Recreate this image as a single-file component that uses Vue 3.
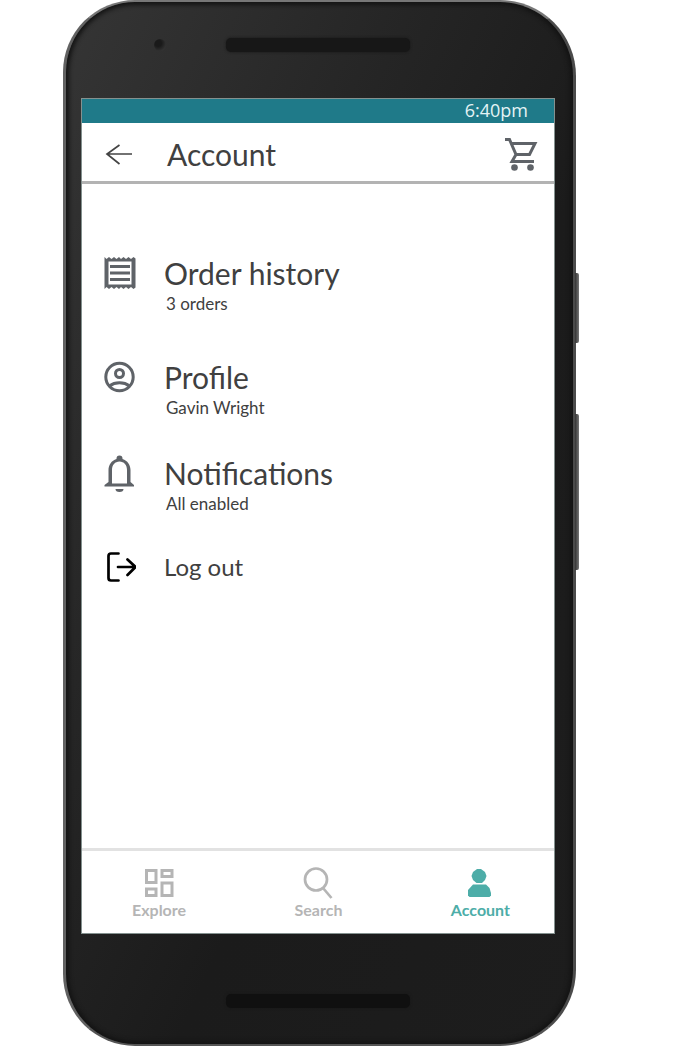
<script setup>
const entries = [
  { id: 'orders', title: 'Order history', detail: '3 orders' },
  { id: 'profile', title: 'Profile', detail: 'Gavin Wright' },
  { id: 'notifications', title: 'Notifications', detail: 'All enabled' },
]
</script>

<template>
  <div class="page">
    <div class="phone">
      <div class="side-keys" aria-hidden="true">
        <span class="key power"></span>
        <span class="key volume"></span>
      </div>
      <div class="bezel top" aria-hidden="true">
        <span class="camera"></span>
        <span class="speaker"></span>
      </div>

      <div class="screen">
        <div class="status"><time>6:40pm</time></div>

        <header class="appbar">
          <button class="icon-button" type="button" aria-label="Back">
            <svg width="28" height="24" viewBox="0 0 28 24" fill="none" stroke="#444" stroke-width="1.7">
              <path d="M27 12H2M14.500 3L2 12l12.500 10" />
            </svg>
          </button>
          <h1>Account</h1>
          <button class="icon-button cart" type="button" aria-label="Cart">
            <svg width="34" height="34" viewBox="0 0 34 34" fill="none" stroke="#5f6368" stroke-width="3">
              <path d="M1 2.500H5.500L12 17.500H25.500L31 6.500H7.500M12 17.500L8 24.500H30" />
              <circle cx="10.500" cy="30.500" r="3.300" fill="#5f6368" stroke="none" />
              <circle cx="26.500" cy="30.500" r="3.300" fill="#5f6368" stroke="none" />
            </svg>
          </button>
        </header>

        <main>
          <ul class="menu">
            <li v-for="entry in entries" :key="entry.id" :class="entry.id">
              <a href="#" class="entry">
                <span class="entry-icon">
                  <svg v-if="entry.id === 'orders'" width="32" height="34" viewBox="0 0 32 34">
                    <path fill="#5f6368" fill-rule="evenodd" d="M0.500 1l2 2 2.500-2 2.500 2L10 1l2.500 2L15 1l2 2 2.500-2L22 3l2.500-2L27 3l2.500-2 2 1.500v29L29.500 33 27 31l-2.500 2-2.500-2-2.500 2-2.500-2-2 2-2.500-2-2.500 2-2.500-2L5 33l-2.500-2-2 2zM4.500 5.500v23h23v-23z" />
                    <path stroke="#5f6368" stroke-width="3" d="M6 10.500h20M6 17h20M6 23.500h20" />
                  </svg>
                  <svg v-else-if="entry.id === 'profile'" width="32" height="32" viewBox="0 0 32 32" fill="none" stroke="#5f6368" stroke-width="3">
                    <circle cx="15.500" cy="16" r="13.700" />
                    <circle cx="15.500" cy="12.500" r="4" />
                    <path d="M5.500 25C11 20.800 20 20.800 25.500 25" />
                  </svg>
                  <svg v-else width="32" height="38" viewBox="0 0 32 38">
                    <path fill="#5f6368" fill-rule="evenodd" d="M12.500 5V4.500a3 3 0 0 1 6 0V5c5 1.500 8 6 8 11v12l3.500 3v1.500H0.500V31l4-3V16c0-5 3-9.500 8-11zM8 29.500h15V16c0-5-3-8.500-7.500-8.500S8 11 8 16z" />
                    <path fill="#5f6368" d="M11.500 35h8a4 3 0 0 1-8 0z" />
                  </svg>
                </span>
                <span class="title">{{ entry.title }}</span>
                <span class="detail">{{ entry.detail }}</span>
              </a>
            </li>
            <li>
              <button type="button" class="entry logout">
                <span class="entry-icon">
                  <svg width="32" height="32" viewBox="0 0 32 32" fill="none" stroke="#000" stroke-width="2.700" stroke-linecap="round" stroke-linejoin="round">
                    <path d="M14.500 2.500H7a2.500 2.500 0 0 0-2.500 2.500v22A2.500 2.500 0 0 0 7 29.500h7.500M14 16H31.500M23.500 8.500L31.500 16l-8 8" />
                  </svg>
                </span>
                <span class="action">Log out</span>
              </button>
            </li>
          </ul>
        </main>

        <nav class="tabs" aria-label="Main">
          <a href="#">
            <svg width="30" height="30" viewBox="0 0 30 30" fill="none" stroke="#b5b5b5" stroke-width="3">
              <path d="M2.500 2.500h9.500v12H2.500zM18 2.500h10v6H18zM2.500 21h9.500v6.500H2.500zM18 15h10v12.500H18z" />
            </svg>
            <span>Explore</span>
          </a>
          <a href="#">
            <svg width="30" height="32" viewBox="0 0 30 32" fill="none" stroke="#b5b5b5" stroke-width="2.700">
              <circle cx="13" cy="12.500" r="11" />
              <path d="M20 21L28.500 31" />
            </svg>
            <span>Search</span>
          </a>
          <a href="#" class="current" aria-current="page">
            <svg width="26" height="30" viewBox="0 0 26 30" fill="#4dada8">
              <path d="M10 1h4l4 3 1.500 4-1.500 4-3 3H9.500L6 12 4.500 8 6 4z" />
              <path d="M6 16.500h13L22.500 20l1.500 5v2.500L22.500 29H2.500L1 27.500V22z" />
            </svg>
            <span>Account</span>
          </a>
        </nav>
      </div>

      <div class="bezel bottom" aria-hidden="true">
        <span class="speaker"></span>
      </div>
    </div>
  </div>
</template>

<style>
body {
  margin: 0;
  background: #fff;
}
</style>

<style scoped>
* {
  box-sizing: border-box;
}

.page {
  min-height: 100vh;
  padding: 0 124px 0 63px;
  display: flex;
  font-family: Lato, "Noto Sans", sans-serif;
  color: #404040;
}

.phone {
  position: relative;
  flex: 1;
  display: flex;
  flex-direction: column;
  padding: 0 19px 0 16px;
  border: 3px solid #4b4b4b;
  border-top: 2px solid #777;
  border-left-color: #626262;
  border-bottom: 2px solid #555;
  border-radius: 72px 76px 76px 72px;
  background: linear-gradient(115deg, #353535 0%, #252525 35%, #1b1b1b 60%, #1d1d1d 100%);
  box-shadow: inset 0 0 4px 3px #141414;
}

.side-keys {
  position: absolute;
  top: 271px;
  left: 100%;
  margin-left: 2px;
}

.key {
  display: block;
  width: 4px;
  background: linear-gradient(90deg, #333, #777);
  border-radius: 0 2px 2px 0;
}

.power {
  height: 70px;
}

.volume {
  height: 156px;
  margin-top: 71px;
}

.bezel {
  display: grid;
  grid-template-columns: 1fr 184px 1fr;
  align-items: center;
}

.top {
  height: 97px;
  padding-bottom: 12px;
}

.bottom {
  height: 111px;
  padding-top: 24px;
}

.speaker {
  grid-column: 2;
  height: 14px;
  border-radius: 5px;
  background: #171717;
  box-shadow: 0 0 3px #171717;
}

.bottom .speaker {
  background: #101010;
}

.camera {
  justify-self: end;
  width: 12px;
  height: 12px;
  margin-right: 60px;
  border-radius: 50%;
  background: radial-gradient(circle at 35% 35%, #1a1a1a 30%, #3b3b3b 90%);
}

.screen {
  flex: 1;
  display: flex;
  flex-direction: column;
  background: #fff;
  box-shadow: 0 0 0 1px #84918f;
}

.status {
  height: 24px;
  padding-right: 26px;
  background: #1f7a89;
  color: #e4f3f5;
  font: 18px/22px "Open Sans", "Noto Sans", sans-serif;
  text-align: right;
}

.appbar {
  display: flex;
  align-items: center;
  height: 61px;
  padding: 3px 16px 0 23px;
  border-bottom: 3px solid #b3b3b3;
}

h1 {
  flex: 1;
  margin: 0 0 0 34px;
  font-size: 30px;
  line-height: 40px;
  font-weight: 400;
}

button {
  padding: 0;
  border: 0;
  background: none;
  color: inherit;
  font: inherit;
  text-align: left;
  cursor: pointer;
}

.icon-button,
svg {
  display: block;
}

main {
  flex: 1;
  padding: 69px 22px 24px;
}

.menu {
  margin: 0;
  padding: 0;
  list-style: none;
}

.menu li {
  margin-bottom: 34px;
}

.menu .orders {
  margin-bottom: 42px;
}

.menu .notifications {
  margin-bottom: 32px;
}

.entry {
  display: grid;
  grid-template-columns: 32px 1fr;
  column-gap: 28px;
  align-items: center;
  width: 100%;
  color: inherit;
  text-decoration: none;
}

.entry-icon {
  display: grid;
  place-items: center;
  height: 40px;
}

.title {
  font-size: 30px;
  line-height: 40px;
}

.detail {
  grid-column: 2;
  padding-left: 2px;
  font-size: 17px;
  line-height: 22px;
}

.action {
  font-size: 24px;
  line-height: 40px;
}

.tabs {
  display: flex;
  justify-content: space-between;
  padding: 15px 44px 13px 50px;
  border-top: 3px solid #e2e2e2;
}

.tabs a {
  display: grid;
  grid-template-rows: 34px 20px;
  place-items: center;
  color: #b5b5b5;
  font-size: 16px;
  line-height: 20px;
  font-weight: 700;
  text-decoration: none;
}

.tabs .current {
  color: #4dada8;
}
</style>
